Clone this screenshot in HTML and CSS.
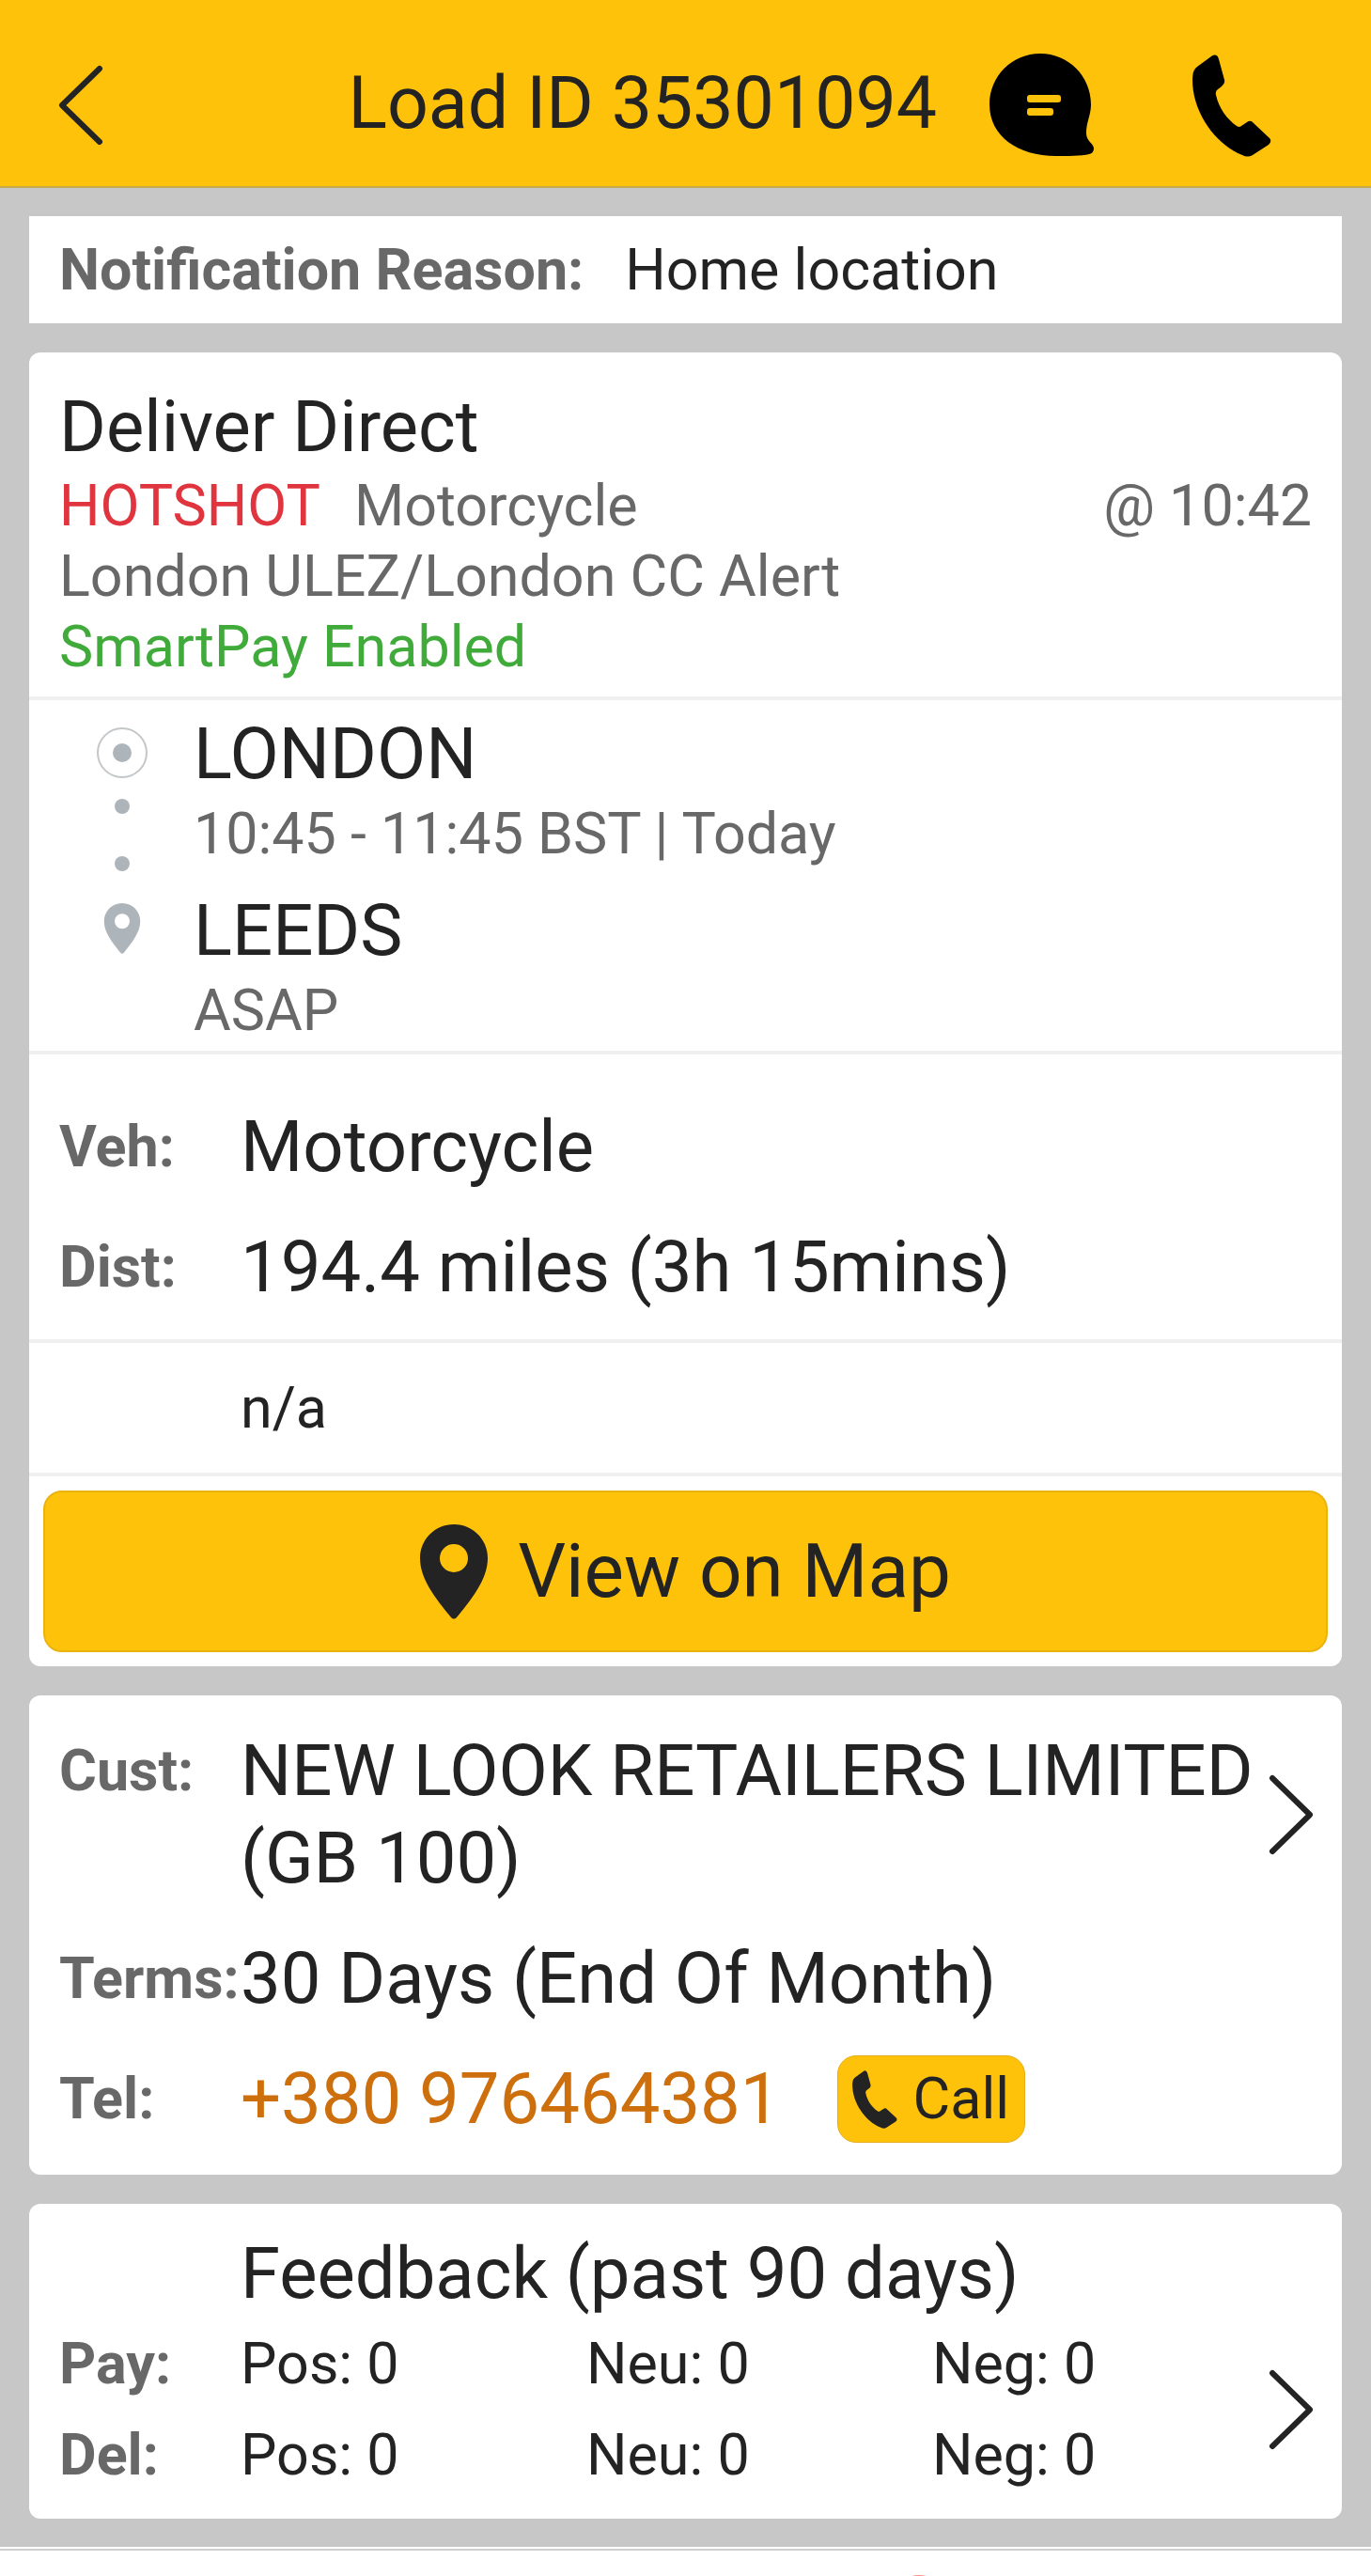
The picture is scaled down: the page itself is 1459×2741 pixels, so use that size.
FILE: index.html
```html
<!DOCTYPE html>
<html lang="en">
<head>
<meta charset="utf-8">
<meta name="viewport" content="width=device-width, initial-scale=1">
<title>Load ID 35301094</title>
<link rel="stylesheet" href="styles.css">
</head>
<body>
<svg class="sprite" aria-hidden="true">
  <symbol id="phone" viewBox="0 0 84 109">
    <path d="M20 2Q26-2 28 5L34 27Q35 31 31 34L27 37Q24 39 25 43C28 57 37 69 47 76Q50 78 52 76L58 72Q62 69 65 73L82 89Q85 92 81 96L64 107Q59 110 53 107C25 96 0 62 0 27Q0 16 5 13Z"/>
  </symbol>
  <symbol id="pin" viewBox="0 0 72 101">
    <path fill-rule="evenodd" d="M36 0C16 0 0 16 0 36C0 58 16 78 33 99Q36 102 39 99C56 78 72 58 72 36C72 16 56 0 36 0ZM36 21A15 15 0 1 1 36 51A15 15 0 1 1 36 21Z"/>
  </symbol>
  <symbol id="chevron" viewBox="0 0 48 86">
    <path d="M4 4L44 43L4 82" fill="none" stroke="currentColor" stroke-width="6" stroke-linecap="round" stroke-linejoin="round"/>
  </symbol>
</svg>

<header class="topbar">
  <button class="icon-button" type="button" aria-label="Back">
    <svg class="chevron chevron-back"><use href="#chevron"/></svg>
  </button>
  <h1 class="topbar-title">Load ID 35301094</h1>
  <button class="icon-button" type="button" aria-label="Messages">
    <svg class="chat" viewBox="0 0 112 110">
      <path d="M54 0C84 0 108 24 108 54C108 66 103 72 103 85C103 93 111 96 111 101Q111 106 106 107C98 109 82 109 71 109C30 109 0 88 0 54C0 24 24 0 54 0Z"/>
      <rect class="chat-line" x="40" y="44" width="36" height="8" rx="3"/>
      <rect class="chat-line" x="40" y="58" width="28" height="8" rx="3"/>
    </svg>
  </button>
  <button class="icon-button icon-button-call" type="button" aria-label="Call">
    <svg class="phone"><use href="#phone"/></svg>
  </button>
</header>

<main class="content">
  <p class="notice"><strong class="label">Notification Reason:</strong><span>Home location</span></p>

  <article class="card">
    <section class="summary">
      <h2 class="large">Deliver Direct</h2>
      <div class="summary-line">
        <span class="hotshot">HOTSHOT</span>
        <span>Motorcycle</span>
        <time class="posted">@ 10:42</time>
      </div>
      <p>London ULEZ/London CC Alert</p>
      <p class="smartpay">SmartPay Enabled</p>
    </section>

    <section class="route">
      <svg class="route-rail" viewBox="0 0 56 243" aria-hidden="true">
        <circle cx="28" cy="28" r="26" fill="none" stroke="#c3c7ca" stroke-width="2"/>
        <circle cx="28" cy="28" r="10"/>
        <circle cx="28" cy="85" r="8"/>
        <circle cx="28" cy="146" r="8"/>
        <use href="#pin" x="8" y="188" width="40" height="54"/>
      </svg>
      <div class="stops">
        <div>
          <h3 class="large">LONDON</h3>
          <p class="stop-time">10:45 - 11:45 BST | Today</p>
        </div>
        <div>
          <h3 class="large">LEEDS</h3>
          <p class="stop-time">ASAP</p>
        </div>
      </div>
    </section>

    <dl class="details">
      <div class="row"><dt class="label">Veh:</dt><dd class="large">Motorcycle</dd></div>
      <div class="row"><dt class="label">Dist:</dt><dd class="large">194.4 miles (3h 15mins)</dd></div>
    </dl>

    <p class="notes">n/a</p>

    <div class="map-action">
      <button class="map-button" type="button">
        <svg class="map-pin"><use href="#pin"/></svg>
        <span>View on Map</span>
      </button>
    </div>
  </article>

  <section class="card">
    <dl class="customer">
      <div class="row row-link">
        <dt class="label">Cust:</dt>
        <dd class="large">NEW LOOK RETAILERS LIMITED (GB 100)</dd>
        <dd class="row-arrow"><button class="icon-button" type="button" aria-label="Customer details"><svg class="chevron"><use href="#chevron"/></svg></button></dd>
      </div>
      <div class="row"><dt class="label">Terms:</dt><dd class="large">30 Days (End Of Month)</dd></div>
      <div class="row">
        <dt class="label">Tel:</dt>
        <dd class="large tel">
          <a href="tel:+380976464381">+380 976464381</a>
          <button class="call-button" type="button"><svg class="call-phone"><use href="#phone"/></svg><span>Call</span></button>
        </dd>
      </div>
    </dl>
  </section>

  <section class="card feedback">
    <h2 class="large feedback-title">Feedback (past 90 days)</h2>
    <div class="feedback-body">
      <table class="scores">
        <tbody>
          <tr><th class="label" scope="row">Pay:</th><td>Pos: 0</td><td>Neu: 0</td><td>Neg: 0</td></tr>
          <tr><th class="label" scope="row">Del:</th><td>Pos: 0</td><td>Neu: 0</td><td>Neg: 0</td></tr>
        </tbody>
      </table>
      <button class="icon-button" type="button" aria-label="Feedback details"><svg class="chevron"><use href="#chevron"/></svg></button>
    </div>
  </section>
</main>

<footer class="tabbar"><div class="tab-badge"></div></footer>
</body>
</html>
```

FILE: styles.css
```css
:root {
  --yellow: #ffc20a;
  --grey: #c7c7c7;
  --ink: #232323;
  --muted: #686868;
  --rule: #f0f0f1;
}

* {
  box-sizing: border-box;
}

body {
  margin: 0;
  min-height: 100vh;
  display: flex;
  flex-direction: column;
  background: var(--grey);
  color: var(--ink);
  font-family: Roboto, "Liberation Sans", sans-serif;
  font-size: 61px;
  line-height: 75px;
}

h1, h2, h3, p, dl, dd {
  margin: 0;
  font-weight: 400;
}

button {
  font: inherit;
  color: inherit;
  cursor: pointer;
}

svg {
  display: block;
  fill: currentColor;
}

.sprite {
  position: absolute;
  width: 0;
  height: 0;
}

.label {
  color: var(--muted);
  font-weight: 700;
  white-space: nowrap;
}

.large {
  font-size: 76px;
  line-height: 93px;
}

.icon-button {
  padding: 0;
  border: 0;
  background: none;
}

.chevron {
  width: 48px;
  height: 86px;
}

.chevron-back {
  transform: scaleX(-1);
}

/* Top bar */

.topbar {
  display: flex;
  align-items: center;
  height: 200px;
  padding: 26px 106px 0 62px;
  background: var(--yellow);
  border-bottom: 2px solid #c6a94a;
}

.topbar-title {
  flex: 1;
  padding: 0 56px 4px 0;
  font-size: 77px;
  line-height: 93px;
  text-align: right;
}

.topbar .icon-button:not(:first-child) {
  color: #000;
}

.icon-button-call {
  margin-left: 104px;
}

.chat {
  width: 112px;
  height: 110px;
}

.chat-line {
  fill: var(--yellow);
}

.phone {
  width: 84px;
  height: 109px;
}

/* Cards */

.content {
  display: flex;
  flex-direction: column;
  gap: 31px;
  padding: 30px 31px;
}

.notice {
  display: flex;
  align-items: center;
  gap: 44px;
  min-height: 114px;
  padding: 0 32px;
  background: #fff;
}

.card {
  background: #fff;
  border-radius: 12px;
}

.summary {
  padding: 33px 32px 15px;
  border-bottom: 4px solid var(--rule);
  color: var(--muted);
}

.summary h2 {
  color: var(--ink);
}

.summary-line {
  display: flex;
  gap: 36px;
}

.hotshot {
  color: #e0353f;
}

.posted {
  margin-left: auto;
}

.smartpay {
  color: #40ab3b;
}

.route {
  display: flex;
  gap: 48px;
  padding: 11px 33px 5px 71px;
  border-bottom: 4px solid var(--rule);
}

.route-rail {
  flex: none;
  width: 56px;
  height: 243px;
  margin-top: 17px;
  color: #adb5ba;
}

.stops {
  display: flex;
  flex-direction: column;
  gap: 19px;
}

.stop-time {
  padding-top: 1px;
  color: var(--muted);
}

.details {
  display: flex;
  flex-direction: column;
  gap: 35px;
  padding: 52px 32px 30px;
  border-bottom: 4px solid var(--rule);
}

.row {
  display: flex;
  align-items: center;
}

.row .label {
  flex: none;
  width: 193px;
}

.notes {
  padding: 32px 33px 31px 225px;
  border-bottom: 4px solid var(--rule);
}

.map-action {
  padding: 15px;
}

.map-button {
  display: flex;
  align-items: center;
  justify-content: center;
  gap: 32px;
  width: 100%;
  height: 172px;
  border: 2px solid #eab40f;
  border-radius: 20px;
  background: var(--yellow);
  font-size: 80px;
  line-height: 93px;
}

.map-pin {
  width: 72px;
  height: 101px;
}

/* Customer */

.customer {
  display: flex;
  flex-direction: column;
  gap: 35px;
  padding: 34px 30px 34px 32px;
}

.row-link {
  align-items: flex-start;
}

.row-link .label {
  line-height: 93px;
}

.row-link .large {
  flex: 1;
}

.row-arrow {
  display: flex;
  align-self: center;
}

.tel {
  display: flex;
  align-items: center;
  gap: 60px;
}

.tel a {
  color: #cd6f0d;
  text-decoration: none;
}

.call-button {
  display: flex;
  align-items: center;
  gap: 16px;
  height: 93px;
  padding: 0 16px 0 14px;
  border: 1px solid #e3ae18;
  border-radius: 20px;
  background: var(--yellow);
  font-size: 61px;
  line-height: 75px;
}

.call-phone {
  width: 50px;
  height: 62px;
}

/* Feedback */

.feedback {
  padding: 28px 30px 30px 32px;
}

.feedback-title {
  padding-left: 193px;
}

.feedback-body {
  display: flex;
  align-items: center;
  justify-content: space-between;
  padding-top: 12px;
}

.scores {
  border-collapse: collapse;
  text-align: left;
}

.scores th,
.scores td {
  width: 368px;
  padding: 0;
}

.scores th {
  width: 193px;
}

.scores td:last-child {
  width: 240px;
}

.scores tr + tr > * {
  padding-top: 22px;
}

/* Bottom bar */

.tabbar {
  height: 31px;
  flex: 1 0 auto;
  overflow: hidden;
  border-top: 2px solid #fff;
  background: #fff;
  box-shadow: inset 0 2px 0 #cdcfcf;
}

.tab-badge {
  width: 60px;
  height: 60px;
  margin: 28px 0 0 65%;
  border-radius: 50%;
  background: #ff8d85;
}
```
